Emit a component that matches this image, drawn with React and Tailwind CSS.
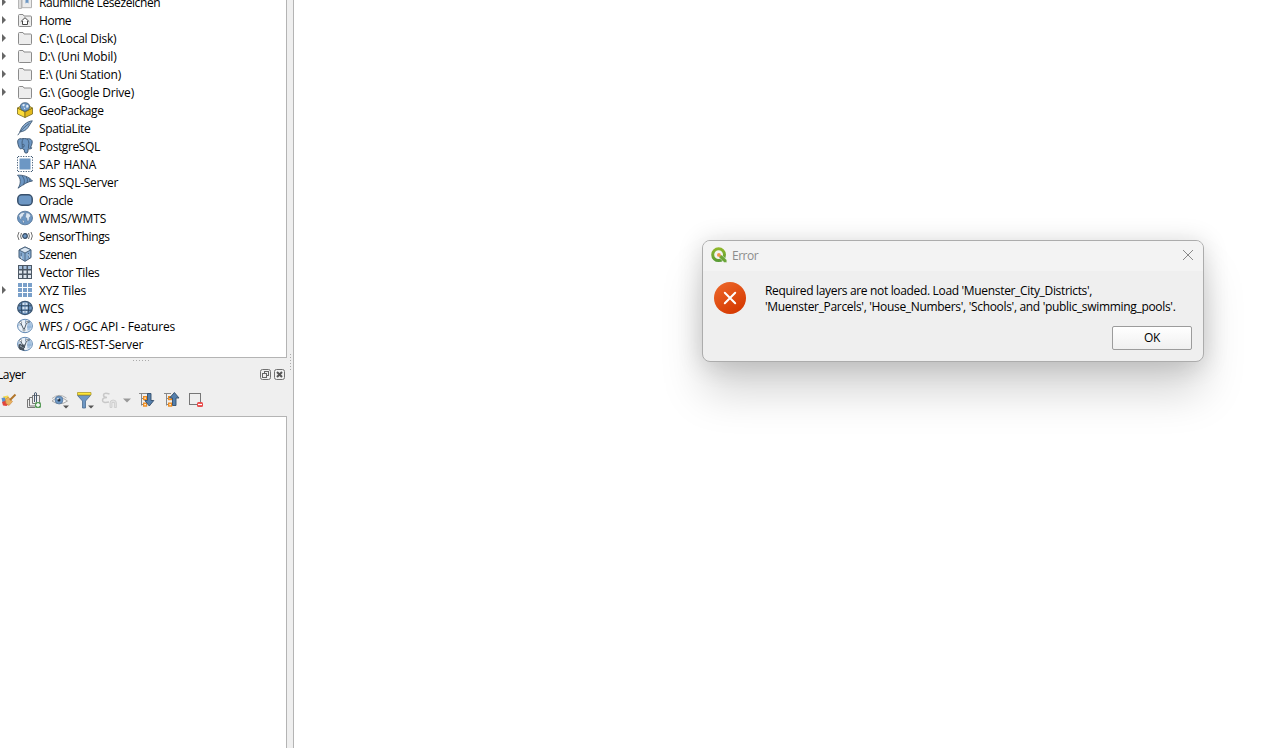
import React from "react";

const BLUE = "#6d97c4";
const NAVY = "#415a75";

function Icon({ children, size = 16 }) {
  return (
    <svg width={size} height={size} viewBox={`0 0 ${size} ${size}`} className="mb-[2px] shrink-0" fill="none">
      {children}
    </svg>
  );
}

const FOLDER = "M1.500 13.500V3.500q0-1 1-1h3.500l1 1.500h6.500q1 0 1 1v8.500q0 1-1 1h-11q-1 0-1-1z";

const FolderIcon = () => (
  <Icon>
    <path d={FOLDER} fill="#ededed" stroke="#8b8b8b" />
  </Icon>
);

const HomeIcon = () => (
  <Icon>
    <path d={FOLDER} fill="#ededed" stroke="#8b8b8b" />
    <path d="M3.800 9.700L8 5.700l4.200 4M5.500 9v3.500h5V9" fill="#fff" stroke="#444" />
  </Icon>
);

const BookmarkIcon = () => (
  <Icon>
    <path d="M1.500 1.500h3v13h-3z" fill="#ddd" stroke="#b5b5b5" />
    <path d="M5 1.500h9.500v12.200H5z" fill="#ececec" stroke="#b0b0b0" />
    <path d="M8.500 5.500h3v4L10 8.500 8.500 9.500z" fill={BLUE} />
  </Icon>
);

const GeoPackageIcon = () => (
  <Icon>
    <path d="M.5 6L8 9.800v5.700L.5 12z" fill="#fbdc3b" stroke="#7b6b1d" strokeWidth=".8" />
    <path d="M15.500 6L8 9.800v5.700l7.500-3.500z" fill="#e3b91b" stroke="#7b6b1d" strokeWidth=".8" />
    <path d="M.5 6L4 4h8l3.500 2L8 9.800z" fill="#f2cf3a" stroke="#7b6b1d" strokeWidth=".8" />
    <path d="M3.200 5q.3-4.300 4.800-4.300T12.800 5q-.3 2-2 3L8 9.300 5.200 8Q3.500 7 3.200 5z" fill={BLUE} stroke={NAVY} strokeWidth=".8" />
    <path d="M5 3l2-1.300 1 1.300-1.500 1.500zM9 3.500l2-.8.600 2.300-2 1zM6.500 5.500l1.800.4-.5 1.700z" fill="#e6eef7" />
  </Icon>
);

const FeatherIcon = () => (
  <Icon>
    <path d="M15.300.8C9.500 1.500 5 5.500 2.800 12c3.500-.6 6-1.500 8.200-4.500 1.500-2.200 2.500-4 4.300-6.700z" fill="#86abd1" stroke={NAVY} strokeWidth=".9" />
    <path d="M12.500 3.200C8 6.500 4 10 .8 15.200" stroke={NAVY} strokeWidth=".9" />
  </Icon>
);

const ElephantIcon = () => (
  <Icon>
    <path
      d="M4.500.8C2 .3.500 1.500.700 4c.200 2.800 1.300 6 2.600 6.800.8.400 1.500-.3 2-.9.100 1.300.9 1.600 2 1.500l.2 2.500c.2 1.300 2.900 1.800 3.300.1l.4-3.200c1.600.4 3.300-.1 3.700-.9l-1.500-.4c1.400-2.200 2.300-5.400 1.500-7C13.800.7 12 .500 10 .9 8.500.4 6.500.4 4.500.8z"
      fill={BLUE}
      stroke={NAVY}
      strokeWidth="1"
    />
    <path d="M6 1.200C4.800 3 5 5 5.200 6.800L5.300 9.500M10 1c1.800 1.500 2.200 4 1.700 6l-.3 3M5.200 6.500c1.300-.6 2-.2 2 1.200-.1 1-.8 2-1.800 2.300" stroke={NAVY} strokeWidth=".9" />
  </Icon>
);

const HanaIcon = () => (
  <Icon>
    <rect x="2.500" y="2.500" width="11" height="11" fill={BLUE} />
    <path d="M1 .5h14M1 15.500h14" stroke={NAVY} strokeDasharray="1.200 1.360" strokeWidth="1" />
    <path d="M.5 1v14M15.500 1v14" stroke={NAVY} strokeDasharray="1.200 1.360" strokeWidth="1" />
  </Icon>
);

const MssqlIcon = () => (
  <Icon>
    <path d="M.5 1.200C6 .8 12 2.500 15.500 7c-4.500.5-8.500 3-14.500 7.200C4 10 4.200 4.500.5 1.200z" fill={BLUE} stroke={NAVY} strokeWidth=".9" />
    <path d="M5 1.800c2.800 3 3 6.500 1.200 9.500M9 2.700c1.700 2 1.800 4 .8 6.300M12 4.300c1 1.200 1 2.200.6 3.400" stroke="#3f5b7b" strokeWidth=".9" />
  </Icon>
);

const OracleIcon = () => (
  <Icon>
    <rect x=".8" y="2.800" width="14.400" height="10.400" rx="4" fill={BLUE} stroke="#38506c" strokeWidth="1.500" />
  </Icon>
);

const GlobeIcon = () => (
  <Icon>
    <ellipse cx="8" cy="8" rx="7.500" ry="6.800" fill={BLUE} stroke="#58779a" strokeWidth=".9" />
    <path
      d="M1.800 5.500L4 3l3-.8.8 1.500L6 5l.8 1.500-2 .3L4.500 8.500 3.500 9.500 2.500 7.500zM9 2.800l3 .4L14 6l-1.500 1.200-.5 3-1.500 1.500L9.700 8 8.200 7l.6-1.800zM5 10l2 .5.3 1.300-1 1.700z"
      fill="#dce7f3"
      stroke="#4a6686"
      strokeWidth=".4"
    />
  </Icon>
);

const SensorIcon = () => (
  <Icon>
    <circle cx="8" cy="8" r="2.300" fill={BLUE} stroke="#354a62" strokeWidth="1.200" />
    <path d="M4.500 5Q2.700 8 4.500 11M2 4Q-.700 8 2 12M11.500 5Q13.300 8 11.500 11M14 4q2.700 4 0 8" stroke="#707070" strokeWidth="1" />
  </Icon>
);

const CubeIcon = () => (
  <Icon>
    <path d="M2 4l6-3L14 3.800v7.800L8 15.300l-6-3.700z" fill="#86abd1" stroke={NAVY} strokeWidth="1" />
    <path d="M2 4l6-3L14 3.800 8 7z" fill="#dbe7f3" stroke={NAVY} strokeWidth=".9" />
    <path d="M8 7v8.200M4.200 6.800v4.700M11.500 7v4.500" stroke={NAVY} strokeWidth=".8" />
    <path d="M4 10l1 3M11 8l1.500 3" stroke="#dbe7f3" strokeWidth=".8" />
  </Icon>
);

const VectorTilesIcon = () => (
  <Icon>
    <rect x="1" y="1" width="14" height="14" fill="#4d5966" />
    {[2, 6.500, 11].map((y) =>
      [2, 6.500, 11].map((x) => (
        <rect key={`${x}-${y}`} x={x} y={y} width="3" height="3" fill={y === 2 ? "#a5c0dd" : "#dfe6ee"} />
      ))
    )}
  </Icon>
);

const XyzIcon = () => (
  <Icon>
    {[1, 6, 11].map((y) => [1, 6, 11].map((x) => <rect key={`${x}-${y}`} x={x} y={y} width="4" height="4" fill="#7aa0ca" />))}
  </Icon>
);

const WcsIcon = () => (
  <Icon>
    <ellipse cx="8" cy="8" rx="7.400" ry="6.600" fill={BLUE} stroke="#3c5672" strokeWidth="1.200" />
    <path d="M1.500 5.800h13M1.500 10.200h13M5 2.500Q3.500 8 5 13.500M11 2.500q1.500 5.500 0 11" stroke="#304860" strokeWidth="1" />
    <path d="M5.500 2.800h5v2.200h-5zM5.500 6.800h5v2.400h-5zM5.800 11h4.400v1.700H5.800z" fill="#d6e3f0" />
    <path d="M8 3v10" stroke="#56779c" strokeWidth=".8" />
  </Icon>
);

const VertexGlobe = () => (
  <>
    <ellipse cx="8" cy="8" rx="7.400" ry="6.700" fill="#eaf1f8" stroke="#6289b3" strokeWidth="1" />
    <path d="M11 3l2.500 1.500 1.200 3-1.500 4-2.700 1.200-.5-4z" fill="#a3c1e0" />
    <path d="M1 7h3M8.500 1.500v4M10 9h5" stroke="#86a9ce" strokeWidth=".8" />
    <path d="M3.500 4.500L7 12l2.800-7.700L13 3.800" stroke="#4d5a66" strokeWidth="1" />
    <circle cx="3.500" cy="4.500" r="1.100" fill="#fff" stroke="#4d5a66" strokeWidth=".6" />
    <circle cx="9.800" cy="4.300" r="1.100" fill="#fff" stroke="#4d5a66" strokeWidth=".6" />
  </>
);

const WfsIcon = () => (
  <Icon>
    <VertexGlobe />
    <circle cx="7" cy="12" r="1.100" fill="#fff" stroke="#4d5a66" strokeWidth=".6" />
  </Icon>
);

const ArcgisIcon = () => (
  <Icon>
    <VertexGlobe />
    <path d="M1.500 8.500l2-.8L5 9l2.500-.8L8 11l-1 1.500.5 2.500-2.500-1L3 14l-1.500-2z" fill="#47525d" />
    <path d="M3 9.500l1.500.5-.3 1.500zM5.500 11l1 .3-.6 1z" fill="#dce7f3" />
  </Icon>
);

const items = [
  { label: "Räumliche Lesezeichen", icon: BookmarkIcon, arrow: true, track: "tracking-[-0.4px]" },
  { label: "Home", icon: HomeIcon, arrow: true, track: "tracking-[-0.45px]" },
  { label: "C:\\ (Local Disk)", icon: FolderIcon, arrow: true, track: "tracking-[-0.23px]" },
  { label: "D:\\ (Uni Mobil)", icon: FolderIcon, arrow: true, track: "tracking-[-0.17px]" },
  { label: "E:\\ (Uni Station)", icon: FolderIcon, arrow: true, track: "tracking-[-0.24px]" },
  { label: "G:\\ (Google Drive)", icon: FolderIcon, arrow: true, track: "tracking-[-0.19px]" },
  { label: "GeoPackage", icon: GeoPackageIcon, track: "tracking-[-0.4px]" },
  { label: "SpatiaLite", icon: FeatherIcon, track: "tracking-[-0.35px]" },
  { label: "PostgreSQL", icon: ElephantIcon, track: "tracking-[-0.4px]" },
  { label: "SAP HANA", icon: HanaIcon, track: "tracking-[-0.02px]" },
  { label: "MS SQL-Server", icon: MssqlIcon, track: "tracking-[-0.25px]" },
  { label: "Oracle", icon: OracleIcon, track: "tracking-[-0.45px]" },
  { label: "WMS/WMTS", icon: GlobeIcon, track: "tracking-[-0.08px]" },
  { label: "SensorThings", icon: SensorIcon, track: "tracking-[-0.37px]" },
  { label: "Szenen", icon: CubeIcon, track: "tracking-[-0.45px]" },
  { label: "Vector Tiles", icon: VectorTilesIcon, track: "tracking-[-0.32px]" },
  { label: "XYZ Tiles", icon: XyzIcon, arrow: true, track: "tracking-[-0.18px]" },
  { label: "WCS", icon: WcsIcon, track: "tracking-[-0.1px]" },
  { label: "WFS / OGC API - Features", icon: WfsIcon, track: "tracking-[-0.17px]" },
  { label: "ArcGIS-REST-Server", icon: ArcgisIcon, track: "tracking-[-0.2px]" },
];

function TreeRow({ label, icon: Glyph, arrow, track }) {
  return (
    <li className="flex h-[18px] shrink-0 items-center">
      <span className="mb-[2px] flex w-[17px] shrink-0 pl-[2px]">
        {arrow && (
          <svg width="4" height="8" viewBox="0 0 4 8">
            <path d="M0 0L3.500 3.500v1L0 8z" fill="#666" />
          </svg>
        )}
      </span>
      <Glyph />
      <span className={`ml-[6px] whitespace-nowrap leading-[18px] ${track}`}>{label}</span>
    </li>
  );
}

function Toolbar() {
  return (
    <div className="flex h-[30px] items-center">
      <svg width="208" height="24" viewBox="0 0 208 24" fill="none">
        {/* style brush */}
        <path d="M3 8.500l5-1 1.500 4-5 2.500z" fill="#f3d94c" />
        <path d="M1.500 10l3.500-.5 1 4-3.500 1z" fill="#5b8fd0" />
        <path d="M2 14l4-1.500 3.500 3-3 2.500-3.500-.5z" fill="#e2443c" />
        <path d="M5.500 11.500l2.700-2.500 4.300 4.500-3.500 4-3-2z" fill="#eab262" stroke="#c8873a" strokeWidth=".6" />
        <path d="M10 12L15.500 6.500" stroke="#b1752a" strokeWidth="2" />
        {/* add group */}
        <path d="M32.500 7.500H39.500V15.500H32.500zM32 9.500h-2.500v8.500H36M29.500 11.500h-2v8H35" stroke="#777" />
        <path d="M34.500 14V6q0-1.500 1-1.500t1 1.500V14" stroke="#4b5c70" />
        <rect x="35" y="14" width="6" height="6" rx="1.500" fill="#5a9c5b" />
        <path d="M38 15v4M36 17h4" stroke="#fff" strokeWidth="1.300" />
        {/* visibility */}
        <path d="M52 13Q59 6 67.500 13 60 18.500 52 13z" fill="#f7f7f7" stroke="#aaa" />
        <path d="M52 10.500Q59 4.500 66.500 10" stroke="#b5b5b5" />
        <circle cx="59" cy="12" r="4" fill="#6d97c4" stroke="#526f91" strokeWidth=".6" />
        <circle cx="59" cy="12" r="1.500" fill="#22303f" />
        <circle cx="58" cy="10.800" r=".8" fill="#fff" />
        <path d="M63 17.500h6l-3 3z" fill="#555" />
        {/* filter */}
        <path d="M77.500 7.500l5 5.500v7h3v-7l5-5.500z" fill="#6d97c4" stroke="#4a6b91" strokeWidth=".8" />
        <path d="M77.500 4.500h13.500v2.500H77.500z" fill="#ffe838" stroke="#ad9b2b" strokeWidth=".8" />
        <path d="M88 17.500h6l-3 3z" fill="#555" />
        {/* expression filter */}
        <path d="M109.500 6q-6-1.800-6 1.200 0 2.200 3.500 2.200-4.500 0-4.500 2.800 0 3.300 6.500 1.800" stroke="#c8c8c8" strokeWidth="1.500" />
        <path d="M110 15q0-3 3.200-3t3.200 3v4.500h-2v-5h-2.400v5H110z" fill="#e2e2e2" stroke="#cacaca" strokeWidth=".8" />
        <path d="M123 10.500h8l-4 4z" fill="#999" />
        {/* expand all */}
        <path d="M139 5.500h11M141.500 5.500v12M141.500 10.500h2M141.500 16.500h2" stroke="#888" />
        <rect x="143.700" y="8.700" width="2.800" height="2.800" fill="#fff" stroke="#f08c1c" strokeWidth="1.400" />
        <rect x="143.700" y="15.200" width="2.800" height="2.800" fill="#fff" stroke="#f08c1c" strokeWidth="1.400" />
        <path d="M147.500 5.500h3.500v7h2.800l-4.500 5.500L144.800 12.500h2.700z" fill="#5580ad" stroke="#344e6b" strokeWidth=".9" />
        {/* collapse all */}
        <path d="M164 5.500h7M166.500 5.500v12M166.500 10.500h2M166.500 16.500h2" stroke="#888" />
        <rect x="168.700" y="8.700" width="2.800" height="2.800" fill="#fff" stroke="#f08c1c" strokeWidth="1.400" />
        <rect x="168.700" y="15.200" width="2.800" height="2.800" fill="#fff" stroke="#f08c1c" strokeWidth="1.400" />
        <path d="M172.500 17.500v-7.500h-3l4.900-5.500L179 10h-3v7.500z" fill="#5580ad" stroke="#344e6b" strokeWidth=".9" />
        {/* remove layer */}
        <rect x="189.500" y="5.500" width="11" height="11" stroke="#777" />
        <rect x="197" y="14" width="6" height="5" rx="1.500" fill="#e84a4a" />
        <path d="M198 16.500h4" stroke="#fff" strokeWidth="1.200" />
      </svg>
    </div>
  );
}

function DockButtons() {
  return (
    <svg width="26" height="12" viewBox="0 0 26 12" fill="none">
      <rect x=".5" y=".5" width="10" height="10" rx="2" stroke="#707070" />
      <rect x="4.500" y="2.500" width="4" height="4" stroke="#666" />
      <rect x="2.500" y="4.500" width="4" height="4" fill="#efefef" stroke="#666" />
      <rect x="14.500" y=".5" width="10" height="10" rx="2" stroke="#707070" />
      <path d="M17 3l5 5M22 3L17 8" stroke="#555" strokeWidth="2" />
    </svg>
  );
}

function Sidebar() {
  return (
    <aside className="flex w-[294px] shrink-0 border-r border-[#b4b4b4] bg-[#efefef]">
      <div className="flex w-[287px] shrink-0 flex-col">
        <ul className="flex h-[358px] shrink-0 flex-col overflow-hidden border-r border-b border-[#b4b4b4] bg-white">
          <li className="-mt-[6px] h-0 shrink-0" />
          {items.map((item) => (
            <TreeRow key={item.label} {...item} />
          ))}
        </ul>
        <div className="flex h-[6px] shrink-0 justify-center pt-[2px] pr-[5px]">
          <svg width="17" height="1">
            <path d="M0 .5h17" stroke="#aaa" strokeDasharray="1 2" />
          </svg>
        </div>
        <header className="flex h-[21px] shrink-0 items-center justify-between pr-[1px]">
          <span className="-ml-[3px] tracking-[-0.4px]">Layer</span>
          <DockButtons />
        </header>
        <div className="h-[31px] shrink-0">
          <Toolbar />
        </div>
        <div className="grow border-t border-r border-[#b4b4b4] bg-white" />
      </div>
      <div className="flex pt-[354px] pl-[3px]">
        <svg width="1" height="17">
          <path d="M.5 0v17" stroke="#aaa" strokeDasharray="1 2" />
        </svg>
      </div>
    </aside>
  );
}

function QgisLogo() {
  return (
    <svg width="16" height="16" viewBox="0 0 16 16" className="mb-[2px]" fill="none">
      <defs>
        <linearGradient id="leaf" x1="0" y1="0" x2="0" y2="1">
          <stop offset="0" stopColor="#93b92b" />
          <stop offset="1" stopColor="#569a35" />
        </linearGradient>
      </defs>
      <path
        fillRule="evenodd"
        d="M7.600.3a7.400 7.400 0 1 0 0 14.800 7.400 7.400 0 0 0 0-14.800zM7.600 3.300a4.400 4.400 0 1 1 0 8.800 4.400 4.400 0 0 1 0-8.800z"
        fill="url(#leaf)"
      />
      <path d="M8 8h2.800l5 5v2.500h-2.600L8 10.500z" fill="#6aa637" stroke="#f3f3f3" strokeWidth=".5" />
      <circle cx="7.900" cy="7.900" r="1.900" fill="#f2954a" />
    </svg>
  );
}

function ErrorDialog() {
  return (
    <section
      role="dialog"
      className="absolute top-[240px] left-[702px] flex h-[122px] w-[502px] flex-col overflow-hidden rounded-[8px] border border-[#acacac] bg-[#efefef] shadow-[0_32px_44px_-2px_rgba(0,0,0,0.17),0_2px_26px_rgba(0,0,0,0.16)]"
    >
      <header className="flex h-[30px] shrink-0 items-center bg-[#f3f3f3] pr-[9px] pl-[8px]">
        <QgisLogo />
        <span className="ml-[5px] grow tracking-[-0.5px] text-[#8c8c8c]">Error</span>
        <svg width="12" height="12" viewBox="0 0 12 12" className="mb-[2px]" fill="none">
          <path d="M1 1l10 10M11 1L1 11" stroke="#888" />
        </svg>
      </header>
      <div className="flex pt-[11px] pl-[11px]">
        <svg width="32" height="32" viewBox="0 0 32 32" fill="none">
          <defs>
            <linearGradient id="alert" x1="0" y1="0" x2=".6" y2="1">
              <stop offset="0" stopColor="#ee6a2c" />
              <stop offset="1" stopColor="#d63a02" />
            </linearGradient>
          </defs>
          <circle cx="16" cy="16" r="16" fill="url(#alert)" />
          <path d="M10.800 10.800l10.400 10.400M21.200 10.800L10.800 21.200" stroke="#fff" strokeWidth="2" strokeLinecap="round" />
        </svg>
        <div className="mt-[1px] ml-[19px] h-[32px] leading-[16px] whitespace-nowrap">
          <p className="tracking-[-0.33px]">Required layers are not loaded. Load 'Muenster_City_Districts',</p>
          <p className="tracking-[-0.32px]">'Muenster_Parcels', 'House_Numbers', 'Schools', and 'public_swimming_pools'.</p>
        </div>
      </div>
      <div className="flex justify-end pt-[11px] pr-[11px]">
        <button className="h-[24px] w-[80px] rounded-[2px] border border-[#9c9c9c] bg-linear-to-b from-white to-[#f0f0f0] tracking-[-0.3px]">
          OK
        </button>
      </div>
    </section>
  );
}

export default function App() {
  return (
    <div className="relative flex h-[748px] w-[1267px] overflow-hidden bg-white font-['Open_Sans','Noto_Sans',sans-serif] text-[12px] text-black">
      <Sidebar />
      <main className="grow bg-white" />
      <ErrorDialog />
    </div>
  );
}
